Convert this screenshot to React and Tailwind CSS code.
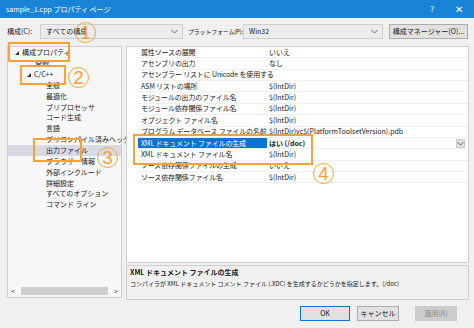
import React from "react";

const ORANGE = "border-[#f5a336]";

const treeItems = [
  { label: "構成プロパティ", level: 0, open: true },
  { label: "全般", level: 1 },
  { label: "C/C++", level: 1, open: true },
  { label: "全般", level: 2 },
  { label: "最適化", level: 2 },
  { label: "プリプロセッサ", level: 2 },
  { label: "コード生成", level: 2 },
  { label: "言語", level: 2 },
  { label: "プリコンパイル済みヘッダー", level: 2 },
  { label: "出力ファイル", level: 2, selected: true },
  { label: "ブラウザー情報", level: 2 },
  { label: "外部インクルード", level: 2 },
  { label: "詳細設定", level: 2 },
  { label: "すべてのオプション", level: 2 },
  { label: "コマンド ライン", level: 2 },
];

const gridRows = [
  ["属性ソースの展開", "いいえ"],
  ["アセンブリの出力", "なし"],
  ["アセンブラー リストに Unicode を使用する", ""],
  ["ASM リストの場所", "$(IntDir)"],
  ["モジュールの出力のファイル名", "$(IntDir)"],
  ["モジュール依存関係ファイル名", "$(IntDir)"],
  ["オブジェクト ファイル名", "$(IntDir)"],
  ["プログラム データベース ファイルの名前", "$(IntDir)vc$(PlatformToolsetVersion).pdb"],
  ["XML ドキュメント ファイルの生成", "はい (/doc)", true],
  ["XML ドキュメント ファイル名", "$(IntDir)"],
  ["ソース依存関係ファイルの生成", "いいえ"],
  ["ソース依存関係ファイル名", "$(IntDir)"],
];

// 小さい下向き矢印
function Chevron() {
  return (
    <svg width="7" height="5" viewBox="0 0 7 5">
      <path d="M0.5 1 L3.5 4 L6.5 1" fill="none" stroke="#555" strokeWidth="0.9" />
    </svg>
  );
}

function Combo({ value, width }) {
  return (
    <div
      className={`${width} shrink-0 h-[15px] flex items-center justify-between pl-[5px] pr-[4px] bg-[#ececec] border border-[#cfcfcf]`}
    >
      <span>{value}</span>
      <Chevron />
    </div>
  );
}

function TreeRow({ item }) {
  const pad = item.level === 0 ? "pl-[7px]" : item.level === 1 ? "pl-[19px]" : "pl-[38px]";
  return (
    <div
      className={`h-[10.85px] flex items-center whitespace-nowrap ${pad} ${
        item.selected ? "bg-[#d9d9e3]" : ""
      }`}
    >
      {item.level < 2 && (
        <span className="w-[7px] flex items-center">
          {item.open && (
            <svg width="4" height="4" viewBox="0 0 4 4">
              <path d="M4 0 L4 4 L0 4 Z" fill="#333" />
            </svg>
          )}
        </span>
      )}
      <span className={item.level === 1 && !item.open ? "pl-[1px]" : ""}>{item.label}</span>
    </div>
  );
}

function GridRow({ name, value, selected }) {
  return (
    <div className="h-[11.36px] flex border-b border-[#f0f0f0] ml-[11px] whitespace-nowrap">
      <div
        className={`w-[129px] shrink-0 pl-[3px] flex items-center tracking-[-0.15px] ${
          selected ? "bg-[#0a74d6] text-white" : ""
        }`}
      >
        {name}
      </div>
      <div className="flex-1 pl-[2px] flex items-center justify-between pr-[3px]">
        <span className={selected ? "font-bold" : ""}>{value}</span>
        {selected && (
          <span className="w-[9px] h-[9px] bg-[#e2e2e2] border border-[#c8c8c8] flex items-center justify-center">
            <Chevron />
          </span>
        )}
      </div>
    </div>
  );
}

function Button({ children, className = "" }) {
  return (
    <div className={`h-[15px] shrink-0 flex items-center justify-center border ${className}`}>
      {children}
    </div>
  );
}

function Circle({ n, className }) {
  return (
    <div
      className={`absolute w-[21px] h-[21px] rounded-full border-[1.5px] ${ORANGE} flex items-center justify-center text-[19px] leading-none font-extralight text-[#f5a336] font-['Liberation_Sans',sans-serif] ${className}`}
    >
      {n}
    </div>
  );
}

function Box({ className }) {
  return <div className={`absolute border-2 ${ORANGE} ${className}`} />;
}

export default function App() {
  return (
    <div className="relative w-[474px] h-[328px] overflow-hidden bg-[#f0f0f0] text-[7px] leading-none text-[#1a1a1a] font-['Noto_Sans_CJK_JP','Noto_Sans',sans-serif]">
      {/* タイトルバー */}
      <div className="h-[18px] bg-[#1883d7] text-white flex items-center justify-between pl-[6px] pr-[11px]">
        <span>sample_1.cpp プロパティ ページ</span>
        <div className="flex items-center gap-[21px] text-[8px]">
          <span>?</span>
          <span className="text-[10px] font-light">✕</span>
        </div>
      </div>

      {/* 構成 / プラットフォーム */}
      <div className="flex items-center mt-[6px] pl-[7px] whitespace-nowrap">
        <span className="w-[33px] shrink-0">構成(C):</span>
        <Combo value="すべての構成" width="w-[143px]" />
        <span className="ml-[5px] w-[55px] shrink-0 text-[6px] tracking-[-0.2px]">プラットフォーム(P):</span>
        <Combo value="Win32" width="w-[140px]" />
        <Button className="ml-[6px] w-[79px] bg-[#e1e1e1] border-[#adadad]">構成マネージャー(O)...</Button>
      </div>

      {/* メイン領域 */}
      <div className="flex mt-[7px] pl-[7px]">
        <div className="w-[115px] h-[252px] bg-[#f7f7f7] border border-[#cfcfcf] flex flex-col">
          <div className="flex-1 pt-[0.5px]">
            {treeItems.map((it, i) => (
              <TreeRow key={i} item={it} />
            ))}
          </div>
          <div className="h-[10px] mb-[1px] flex items-center px-[3px] gap-[2px] text-[#555]">
            <span>&lt;</span>
            <div className="flex-1 h-[8px] bg-[#cdcdcd] mx-[4px]" />
            <span>&gt;</span>
          </div>
        </div>

        <div className="ml-[4px] w-[343px] flex flex-col">
          <div className="h-[217px] bg-white border border-[#cfcfcf]">
            {gridRows.map(([n, v, s], i) => (
              <GridRow key={i} name={n} value={v} selected={s} />
            ))}
          </div>
          <div className="mt-[2px] h-[35px] border border-[#cfcfcf] bg-[#f0f0f0] pl-[3px] pt-[3px] flex flex-col gap-[5px] whitespace-nowrap">
            <div className="font-bold">XML ドキュメント ファイルの生成</div>
            <div className="text-[6px]">
              コンパイラが XML ドキュメント コメント ファイル (.XDC) を生成するかどうかを指定します。(/doc)
            </div>
          </div>
        </div>
      </div>

      {/* ボタン */}
      <div className="flex mt-[6px] pl-[300px]">
        <Button className="w-[50px] bg-[#e1e1e1] border-[#0078d7]">OK</Button>
        <Button className="ml-[7px] w-[42px] bg-[#e1e1e1] border-[#adadad]">キャンセル</Button>
        <Button className="ml-[16px] w-[42px] bg-[#cccccc] border-[#cccccc] text-[#8a8a8a]">適用(A)</Button>
      </div>

      {/* 注釈 */}
      <Circle n="1" className="left-[75px] top-[22px]" />
      <Box className="left-[8px] top-[42px] w-[62px] h-[20px]" />
      <Box className="left-[20px] top-[65px] w-[46px] h-[20px]" />
      <Circle n="2" className="left-[68px] top-[67px]" />
      <Box className="left-[33px] top-[138px] w-[49px] h-[24px]" />
      <Circle n="3" className="left-[97px] top-[147px]" />
      <Box className="left-[133px] top-[134px] w-[180px] h-[31px]" />
      <Circle n="4" className="left-[313px] top-[163px]" />
    </div>
  );
}
